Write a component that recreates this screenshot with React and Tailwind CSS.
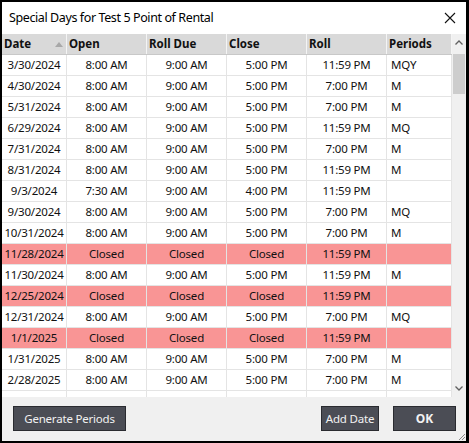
import React from "react";

const rows = [
  ["3/30/2024", "8:00 AM", "9:00 AM", "5:00 PM", "11:59 PM", "MQY"],
  ["4/30/2024", "8:00 AM", "9:00 AM", "5:00 PM", "7:00 PM", "M"],
  ["5/31/2024", "8:00 AM", "9:00 AM", "5:00 PM", "7:00 PM", "M"],
  ["6/29/2024", "8:00 AM", "9:00 AM", "5:00 PM", "11:59 PM", "MQ"],
  ["7/31/2024", "8:00 AM", "9:00 AM", "5:00 PM", "7:00 PM", "M"],
  ["8/31/2024", "8:00 AM", "9:00 AM", "5:00 PM", "11:59 PM", "M"],
  ["9/3/2024", "7:30 AM", "9:00 AM", "4:00 PM", "11:59 PM", ""],
  ["9/30/2024", "8:00 AM", "9:00 AM", "5:00 PM", "7:00 PM", "MQ"],
  ["10/31/2024", "8:00 AM", "9:00 AM", "5:00 PM", "7:00 PM", "M"],
  ["11/28/2024", "Closed", "Closed", "Closed", "11:59 PM", "", true],
  ["11/30/2024", "8:00 AM", "9:00 AM", "5:00 PM", "11:59 PM", "M"],
  ["12/25/2024", "Closed", "Closed", "Closed", "11:59 PM", "", true],
  ["12/31/2024", "8:00 AM", "9:00 AM", "5:00 PM", "7:00 PM", "MQ"],
  ["1/1/2025", "Closed", "Closed", "Closed", "11:59 PM", "", true],
  ["1/31/2025", "8:00 AM", "9:00 AM", "5:00 PM", "7:00 PM", "M"],
  ["2/28/2025", "8:00 AM", "9:00 AM", "5:00 PM", "7:00 PM", "M"],
  ["3/31/2025", "8:00 AM", "9:00 AM", "5:00 PM", "7:00 PM", "MQY"],
];

const cols = "grid grid-cols-[65px_80px_80px_80px_80px_65px]";

export default function App() {
  return (
    <div
      className="w-[469px] h-[443px] bg-black border-l-2 border-t-2 border-r-[3px] border-b-2 border-black flex flex-col overflow-hidden"
      style={{ fontFamily: '"Noto Sans", "Open Sans", sans-serif' }}
    >
      {/* Title bar */}
      <div className="h-[32px] bg-white flex items-center justify-between pl-[7px] pr-[8px] shrink-0">
        <span className="text-[12.5px] text-black tracking-[-0.4px]">Special Days for Test 5 Point of Rental</span>
        <svg width="12" height="12" viewBox="0 0 12 12" className="mr-[2px]">
          <path d="M1 1 L11 11 M11 1 L1 11" stroke="#111" strokeWidth="1.1" />
        </svg>
      </div>

      {/* Grid area */}
      <div className="h-[363px] flex bg-white shrink-0">
        <div className="flex-1 overflow-hidden flex flex-col">
          {/* Header */}
          <div className={`${cols} h-[21px] bg-[#d9d9d9] border-b border-[#c8c8c8] shrink-0`}>
            {["Date", "Open", "Roll Due", "Close", "Roll", "Periods"].map((h, i) => (
              <div
                key={h}
                className="relative flex items-center pl-[2px] text-[11.5px] font-bold text-[#111] border-r border-[#f4f4f4]"
              >
                {h}
                {i === 0 && (
                  <svg width="8" height="5" viewBox="0 0 8 5" className="absolute right-[3px] top-[8px]">
                    <path d="M0 5 L4 0 L8 5 Z" fill="#a8a8a8" />
                  </svg>
                )}
              </div>
            ))}
          </div>
          {/* Rows */}
          {rows.map((r, idx) => {
            const closed = r[6];
            return (
              <div
                key={idx}
                className={`${cols} h-[21px] shrink-0 border-b border-[#e4e4e4] ${closed ? "bg-[#f99595]" : "bg-white"}`}
              >
                {r.slice(0, 6).map((c, j) => (
                  <div
                    key={j}
                    className={`flex items-center text-[11.5px] tracking-[-0.2px] text-[#111] border-r border-[#e4e4e4] whitespace-nowrap ${
                      j === 5 ? "justify-start pl-[4px]" : "justify-center"
                    }`}
                  >
                    {c}
                  </div>
                ))}
              </div>
            );
          })}
        </div>
        {/* Scrollbar */}
        <div className="w-[14px] bg-[#f0f0f0] flex flex-col shrink-0">
          <div className="h-[17px] flex items-center justify-center shrink-0">
            <svg width="8" height="5" viewBox="0 0 8 5">
              <path d="M0.5 4.5 L4 1 L7.5 4.5" stroke="#606060" strokeWidth="1.3" fill="none" />
            </svg>
          </div>
          <div className="flex-1 flex flex-col px-[1px]">
            <div className="h-[40px] bg-[#cdcdcd] mt-[3px]" />
          </div>
          <div className="h-[17px] flex items-center justify-center shrink-0">
            <svg width="8" height="5" viewBox="0 0 8 5">
              <path d="M0.5 0.5 L4 4 L7.5 0.5" stroke="#606060" strokeWidth="1.3" fill="none" />
            </svg>
          </div>
        </div>
      </div>

      {/* Bottom panel */}
      <div className="flex-1 bg-[#f0f0f0] relative flex items-start pt-[9px] pl-[11px] pr-[10px]">
        <button className="h-[25px] w-[113px] bg-[#4b4d55] border border-[#2a2b30] text-[#f2f2f2] text-[11.5px] tracking-[-0.2px] flex items-center justify-center">
          Generate Periods
        </button>
        <div className="flex-1" />
        <button className="h-[25px] w-[58px] bg-[#4b4d55] border border-[#2a2b30] text-[#f2f2f2] text-[11.5px] tracking-[-0.2px] flex items-center justify-center mr-[14px]">
          Add Date
        </button>
        <button className="h-[25px] w-[63px] bg-[#4b4d55] border border-[#2a2b30] text-[#f2f2f2] text-[12px] font-bold flex items-center justify-center">
          OK
        </button>
        <svg width="9" height="9" viewBox="0 0 9 9" className="absolute right-0 bottom-0">
          <path d="M8 2 L2 8 M8 5 L5 8 M8 8 L8 8" stroke="#8a8a8a" strokeWidth="1" />
        </svg>
      </div>
    </div>
  );
}
